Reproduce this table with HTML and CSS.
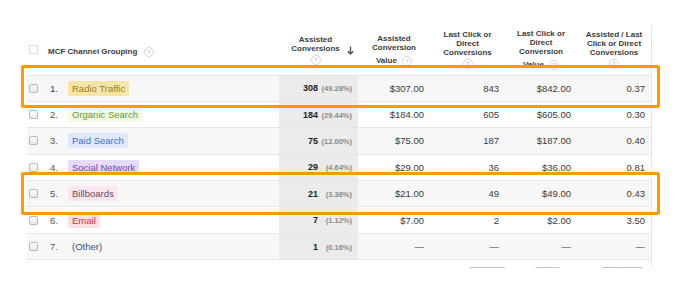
FILE: index.html
```html
<html lang="en">
<head>
    <meta charset="UTF-8">
    <title>MCF Channel Grouping</title>
    <link rel="stylesheet" href="styles.css">
</head>
<body>
    <div class="page">
        <div class="report">
            <table class="grid">
                <colgroup>
                    <col class="w-check">
                    <col class="w-index">
                    <col class="w-name">
                    <col class="w-assist">
                    <col class="w-value">
                    <col class="w-last">
                    <col class="w-lastvalue">
                    <col class="w-ratio">
                </colgroup>
                <thead>
                    <tr>
                        <th class="head-check"><span class="cb cb-head"></span></th>
                        <th class="head-name" colspan="2">MCF Channel Grouping <span class="help">?</span></th>
                        <th class="head-num head-sorted">
                            <div class="sort-wrap">
                                <div>Assisted<br>Conversions<span class="help help-block">?</span></div>
                                <svg class="sort-arrow" width="7" height="9" viewBox="0 0 7 9">
                                    <path d="M3.5 0.5 V8 M0.8 5.2 L3.5 8 L6.2 5.2" fill="none" stroke="#555" stroke-width="1.4"/>
                                </svg>
                            </div>
                        </th>
                        <th class="head-num">Assisted<br>Conversion<br><span class="value-line">Value <span class="help">?</span></span></th>
                        <th class="head-num">Last Click or<br>Direct<br>Conversions<span class="help help-block">?</span></th>
                        <th class="head-num">Last Click or<br>Direct<br>Conversion<br><span class="value-line">Value <span class="help">?</span></span></th>
                        <th class="head-num">Assisted / Last<br>Click or Direct<br>Conversions<span class="help help-block">?</span></th>
                    </tr>
                </thead>
                <tbody>
                    <tr class="alt">
                        <td class="cell-check"><span class="cb"></span></td>
                        <td class="cell-index current">1.</td>
                        <td class="cell-name"><span class="tag tag-radio">Radio Traffic</span></td>
                        <td class="cell-assist"><div class="assist"><b>308</b><span class="pct">(49.28%)</span></div></td>
                        <td class="cell-num">$307.00</td>
                        <td class="cell-num">843</td>
                        <td class="cell-num">$842.00</td>
                        <td class="cell-num">0.37</td>
                    </tr>
                    <tr>
                        <td class="cell-check"><span class="cb"></span></td>
                        <td class="cell-index">2.</td>
                        <td class="cell-name"><span class="tag tag-organic">Organic Search</span></td>
                        <td class="cell-assist"><div class="assist"><b>184</b><span class="pct">(29.44%)</span></div></td>
                        <td class="cell-num">$184.00</td>
                        <td class="cell-num">605</td>
                        <td class="cell-num">$605.00</td>
                        <td class="cell-num">0.30</td>
                    </tr>
                    <tr class="alt">
                        <td class="cell-check"><span class="cb"></span></td>
                        <td class="cell-index">3.</td>
                        <td class="cell-name"><span class="tag tag-paid">Paid Search</span></td>
                        <td class="cell-assist"><div class="assist"><b>75</b><span class="pct">(12.00%)</span></div></td>
                        <td class="cell-num">$75.00</td>
                        <td class="cell-num">187</td>
                        <td class="cell-num">$187.00</td>
                        <td class="cell-num">0.40</td>
                    </tr>
                    <tr>
                        <td class="cell-check"><span class="cb"></span></td>
                        <td class="cell-index">4.</td>
                        <td class="cell-name"><span class="tag tag-social">Social Network</span></td>
                        <td class="cell-assist"><div class="assist"><b>29</b><span class="pct">(4.64%)</span></div></td>
                        <td class="cell-num">$29.00</td>
                        <td class="cell-num">36</td>
                        <td class="cell-num">$36.00</td>
                        <td class="cell-num">0.81</td>
                    </tr>
                    <tr class="alt">
                        <td class="cell-check"><span class="cb"></span></td>
                        <td class="cell-index">5.</td>
                        <td class="cell-name"><span class="tag tag-billboards">Billboards</span></td>
                        <td class="cell-assist"><div class="assist"><b>21</b><span class="pct">(3.36%)</span></div></td>
                        <td class="cell-num">$21.00</td>
                        <td class="cell-num">49</td>
                        <td class="cell-num">$49.00</td>
                        <td class="cell-num">0.43</td>
                    </tr>
                    <tr>
                        <td class="cell-check"><span class="cb"></span></td>
                        <td class="cell-index">6.</td>
                        <td class="cell-name"><span class="tag tag-email">Email</span></td>
                        <td class="cell-assist"><div class="assist"><b>7</b><span class="pct">(1.12%)</span></div></td>
                        <td class="cell-num">$7.00</td>
                        <td class="cell-num">2</td>
                        <td class="cell-num">$2.00</td>
                        <td class="cell-num">3.50</td>
                    </tr>
                    <tr class="alt">
                        <td class="cell-check"><span class="cb"></span></td>
                        <td class="cell-index">7.</td>
                        <td class="cell-name"><span class="tag tag-other">(Other)</span></td>
                        <td class="cell-assist"><div class="assist"><b>1</b><span class="pct">(0.16%)</span></div></td>
                        <td class="cell-num">&mdash;</td>
                        <td class="cell-num">&mdash;</td>
                        <td class="cell-num">&mdash;</td>
                        <td class="cell-num">&mdash;</td>
                    </tr>
                </tbody>
            </table>
            <div class="pager">
                <span class="pager-btn pager-wide"></span>
                <span class="pager-btn pager-small"></span>
                <span class="pager-btn pager-pair"><span></span><span></span></span>
            </div>
        </div>

        <!-- highlight annotations -->
        <div class="mark mark-first"></div>
        <div class="mark mark-second"></div>
    </div>
</body>
</html>
```

FILE: styles.css
```css
body {
    margin: 0;
    background-color: #ffffff;
    font-family: "Liberation Sans", Arial, sans-serif;
    color: #333333;
}

.page {
    position: relative;
    width: 675px;
    height: 298px;
    padding-top: 25px;
    box-sizing: border-box;
}

.report {
    margin-left: 27px;
    width: 624px;
    border-right: 1px solid #e4e4e4;
}

.grid {
    width: 624px;
    table-layout: fixed;
    border-collapse: collapse;
    border-spacing: 0;
}

.w-check { width: 18px; }
.w-index { width: 23px; }
.w-name { width: 211px; }
.w-assist { width: 79px; }
.w-value { width: 72px; }
.w-last { width: 75px; }
.w-lastvalue { width: 72px; }
.w-ratio { width: 74px; }

.grid th {
    height: 50px;
    padding: 0;
    border-bottom: 1px solid #e2e2e2;
    font-size: 8px;
    line-height: 9px;
    font-weight: bold;
    color: #3c3c3c;
    vertical-align: middle;
}

.head-check {
    text-align: left;
    padding-left: 2px !important;
}

.head-name {
    text-align: left;
    padding-left: 3px !important;
    padding-top: 5px !important;
}

.head-num {
    text-align: center;
}

.value-line {
    display: inline-block;
    margin-top: 4px;
}

.sort-wrap {
    display: flex;
    justify-content: center;
    align-items: center;
    gap: 7px;
    padding-left: 8px;
}

.sort-arrow {
    display: block;
    margin-top: 1px;
}

.help {
    display: inline-block;
    width: 8px;
    height: 8px;
    border: 1px solid #d6d6d6;
    border-radius: 50%;
    font-size: 6px;
    line-height: 8px;
    font-weight: normal;
    color: #bdbdbd;
    text-align: center;
    vertical-align: middle;
    margin-left: 3px;
}

.head-name .help {
    margin-left: 4px;
}

.help-block {
    display: block;
    margin: 2px auto 0;
}

.cb {
    display: block;
    width: 7px;
    height: 7px;
    border: 1px solid #b8b8b8;
    border-radius: 2px;
    background: linear-gradient(#fbfbfb, #e9e9e9);
}

.cb-head {
    border-color: #dcdcdc;
    background: #ffffff;
    border-radius: 0;
}

.grid td {
    height: 26.4px;
    padding: 0;
    border-bottom: 1px solid #e6e6e6;
    font-size: 9.5px;
    color: #3a3a3a;
    white-space: nowrap;
}

.grid tr.alt td {
    background-color: #f7f7f7;
}

.grid td.cell-assist,
.grid tr.alt td.cell-assist {
    background-color: #ebebeb;
}

.cell-check {
    padding-left: 2px !important;
}

.cell-index {
    padding-left: 5px !important;
    color: #555555 !important;
}

.cell-index.current {
    color: #24317f !important;
}

.tag {
    display: inline-block;
    padding: 2px 4px;
    line-height: 11px;
    border-radius: 2px;
}

.tag-radio { background-color: #f5e5a6; color: #9b7e22; }
.tag-organic { background-color: #f2fbe6; color: #5e9b34; }
.tag-paid { background-color: #dfe9fb; color: #3d70d6; }
.tag-social { background-color: #e6dbfa; color: #6d44bd; }
.tag-billboards { background-color: #fde5ef; color: #6e4a5d; }
.tag-email { background-color: #fde0e2; color: #d33240; }
.tag-other { color: #2f4c88; }

.assist {
    display: flex;
    justify-content: flex-end;
    align-items: baseline;
    padding-right: 6px;
}

.assist b {
    font-size: 9px;
    color: #222222;
}

.pct {
    width: 34px;
    text-align: right;
    font-size: 7.5px;
    font-weight: bold;
    color: #8a8a8a;
}

.cell-num {
    text-align: right;
    padding-right: 6px !important;
}

.pager {
    display: flex;
    justify-content: flex-end;
    align-items: flex-end;
    height: 7px;
    padding-right: 8px;
}

.pager-btn {
    display: block;
    height: 1px;
    border: 1px solid #c4c4c4;
    border-bottom: none;
    border-radius: 2px 2px 0 0;
    border-left-color: #e2e2e2;
    border-right-color: #e2e2e2;
    margin-bottom: -2px;
}

.pager-wide { width: 35px; margin-right: 29px; }
.pager-small { width: 23px; margin-right: 41px; }
.pager-pair { width: 40px; display: flex; }
.pager-pair span { flex: 1; border-right: 1px solid #dddddd; }
.pager-pair span:last-child { border-right: none; }

.mark {
    position: absolute;
    left: 21px;
    width: 639px;
    height: 43px;
    border: 3px solid #ff9a00;
    border-radius: 2px;
    box-sizing: border-box;
}

.mark-first { top: 65px; }
.mark-second { top: 172px; }
```
